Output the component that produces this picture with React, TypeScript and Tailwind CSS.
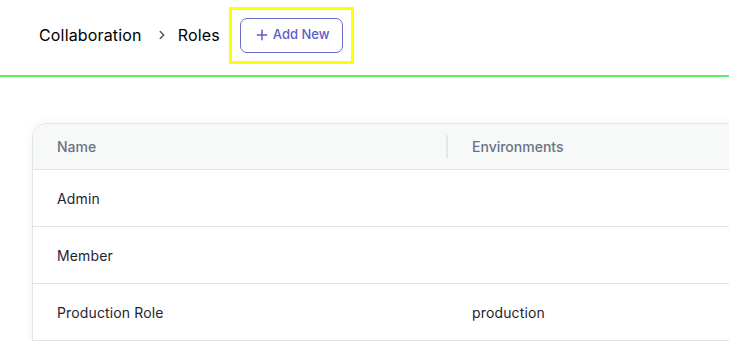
import { Plus, ChevronRight } from "lucide-react";

const roles = [
  { name: "Admin", envs: "" },
  { name: "Member", envs: "" },
  { name: "Production Role", envs: "production" },
];

export default function App() {
  return (
    <div className="h-[341px] w-[729px] overflow-hidden bg-white font-['Inter',sans-serif]">
      <header className="flex h-[77px] items-center border-b-2 border-[#5ced5c] pl-[39px] pb-[5px]">
        <nav className="flex items-center text-[16px] tracking-[0.01em] text-black">
          <span>Collaboration</span>
          <ChevronRight className="ml-[13px] mr-[9px] h-[14px] w-[14px] text-[#555]" strokeWidth={2.5} />
          <span>Roles</span>
        </nav>
        <div className="ml-[9px] border-[3px] border-[#ffff00] p-[8px]">
          <button
            type="button"
            className="flex h-[35px] items-center gap-[3px] rounded-[7px] border border-[#6b6bcb] px-[13px] text-[13px] font-medium text-[#5d5dc2]"
          >
            <Plus className="h-[16px] w-[16px]" strokeWidth={2.2} />
            Add New
          </button>
        </div>
      </header>

      <main className="pl-[32px] pt-[46px]">
        <div className="h-[260px] w-[1000px] overflow-hidden rounded-[14px] border border-[#e3e4e6] shadow-[0_0_12px_rgba(0,0,0,0.05)]">
          <div className="flex h-[46px] items-center border-b border-[#e2e3e8] bg-[#f7f8f8] text-[14px] font-medium text-[#6a7283]">
            <div className="flex w-[415px] items-center justify-between pl-[24px]">
              <span>Name</span>
              <span className="h-[23px] w-[2px] bg-[#e6e7e9]" />
            </div>
            <div className="pl-[24px]">Environments</div>
          </div>
          {roles.map((r) => (
            <div
              key={r.name}
              className="flex h-[57px] items-center border-b border-[#e2e3e8] text-[14px] tracking-[0.01em] text-[#1f2430]"
            >
              <div className="w-[415px] pl-[24px]">{r.name}</div>
              <div className="pl-[24px]">{r.envs}</div>
            </div>
          ))}
        </div>
      </main>
    </div>
  );
}
